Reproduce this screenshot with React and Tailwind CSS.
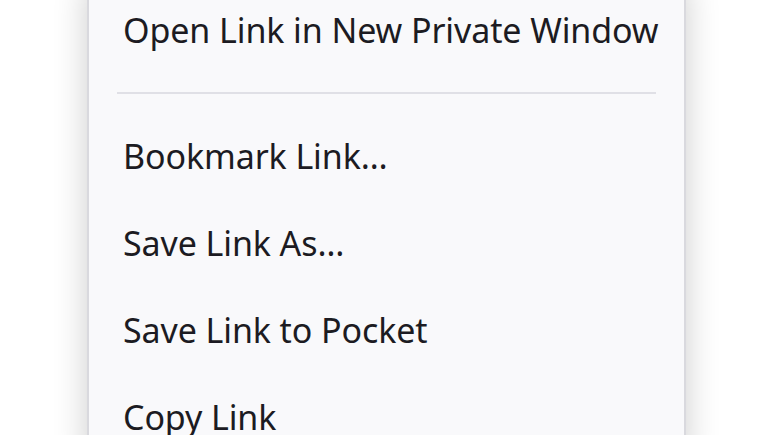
export default function App() {
  const items = ["Bookmark Link…", "Save Link As…", "Save Link to Pocket", "Copy Link"];
  return (
    <div className="w-[773px] h-[435px] overflow-hidden bg-white flex" style={{ fontFamily: '"Noto Sans", "Open Sans", sans-serif' }}>
      <div className="ml-[87px] mt-[-16px] w-[599px] shrink-0 self-start bg-[#f9f9fb] border-2 border-[#d9d9de] shadow-[0_0_32px_rgba(0,0,0,0.2)] flex flex-col text-[34px] tracking-[-0.1px] text-[#1c1b22]">
        <div className="h-[87px] flex items-center pl-[34px] leading-none whitespace-nowrap">Open Link in New Private Window</div>
        <div className="h-[39px] flex items-center px-[28px]">
          <div className="h-[2px] w-full bg-[#e0e0e6]" />
        </div>
        {items.map((t) => (
          <div key={t} className="h-[87px] flex items-center pl-[34px] leading-none whitespace-nowrap">{t}</div>
        ))}
      </div>
    </div>
  );
}
